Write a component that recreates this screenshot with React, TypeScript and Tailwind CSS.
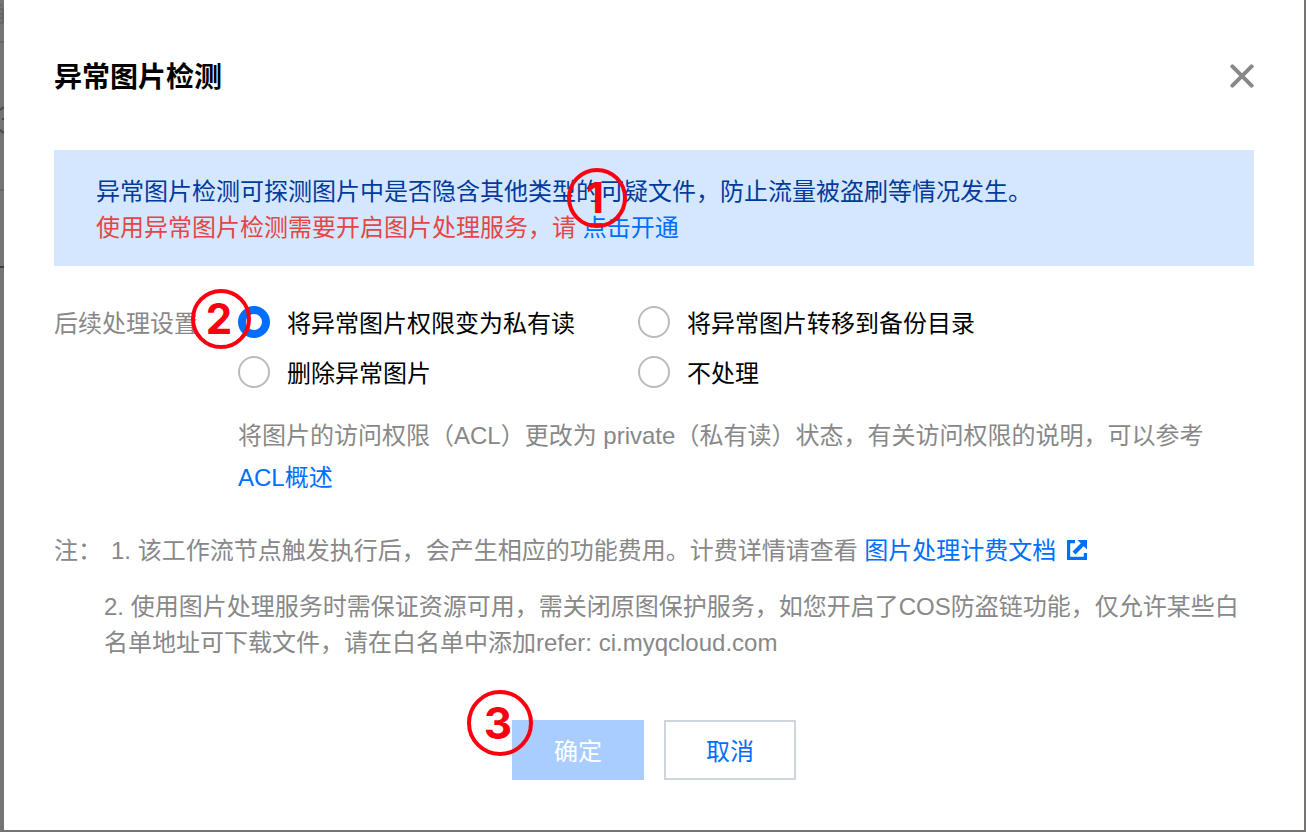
import React, { useState } from 'react';

interface Option { value: string; label: string; }

const OPTIONS: Option[] = [
  { value: 'private', label: '将异常图片权限变为私有读' },
  { value: 'backup', label: '将异常图片转移到备份目录' },
  { value: 'delete', label: '删除异常图片' },
  { value: 'none', label: '不处理' },
];

function StepMark({ n, className }: { n: number; className: string }) {
  return (
    <span className={`pointer-events-none absolute z-10 flex items-center justify-center rounded-full border-4 border-[#fc000f] pr-1 font-['Inter',sans-serif] font-bold leading-none text-[#fc000f] ${className}`}>
      {n}
    </span>
  );
}

function CloseIcon() {
  return (
    <svg width="24" height="24" viewBox="0 0 24 24" fill="none" stroke="#888" strokeWidth="4" strokeLinecap="round" aria-hidden="true">
      <path d="M2.4 2.4 21.6 21.6M21.6 2.4 2.4 21.6" />
    </svg>
  );
}

function ExternalIcon() {
  return (
    <svg width="20" height="20" viewBox="0 0 20 20" fill="none" stroke="#006eff" aria-hidden="true">
      <path d="M8 1.6H1.6V18.4H18.4V13" strokeWidth="3.2" />
      <path d="M7 13 17 3" strokeWidth="4" />
      <path d="M10.5 0H20V9.5Z" fill="#006eff" stroke="none" />
    </svg>
  );
}

// edge of the page that stays visible behind the dialog
function PageEdge() {
  return (
    <div aria-hidden="true" className="w-1 shrink-0 overflow-hidden">
      <svg width="4" height="280" viewBox="0 0 4 280" fill="none" stroke="#4a4948">
        <path d="M0 5h2M0 9h3V23H0M0 14h3M0 18h3" stroke="#5c5b5a" />
        <path d="M0 42h4M0 190h4" strokeWidth="2" stroke="#676665" />
        <path d="M4 107 0 110M2 119h2M0 130l4 3" strokeWidth="2" />
        <path d="M0 267h4" strokeWidth="2" stroke="#3e3d3c" />
      </svg>
    </div>
  );
}

export default function App() {
  const [action, setAction] = useState('private');

  return (
    <div className="flex min-h-screen bg-[#757473] pr-0.5 pb-0.5 font-['Liberation_Sans','Noto_Sans_CJK_SC',sans-serif] text-2xl leading-9 text-[#888]">
      <PageEdge />
      <div role="dialog" aria-labelledby="dialog-title" className="min-w-0 flex-1 bg-white px-[50px] pt-14 pb-[50px]">
        <header className="flex h-10 items-center justify-between">
          <h1 id="dialog-title" className="pt-1 text-[28px] font-bold text-black">异常图片检测</h1>
          <button type="button" aria-label="关闭"><CloseIcon /></button>
        </header>

        <div className="relative mt-[54px] bg-[#d5e7ff] px-[42px] pt-6 pb-5">
          <p className="text-[#003b9c]">异常图片检测可探测图片中是否隐含其他类型的可疑文件，防止流量被盗刷等情况发生。</p>
          <p className="text-[#e54545]">
            使用异常图片检测需要开启图片处理服务，请 <a href="#open" className="text-[#006eff]">点击开通</a>
          </p>
          <StepMark n={1} className="top-[18px] left-[513px] size-[60px] text-[42px]" />
        </div>

        <div role="radiogroup" aria-labelledby="action-label" className="relative mt-10 flex">
          <div id="action-label" className="w-46 shrink-0 pt-0.5 leading-8">后续处理设置</div>
          <div className="min-w-0 flex-1">
            <div className="grid grid-cols-[400px_1fr] gap-y-[18px]">
              {OPTIONS.map((o) => (
                <label key={o.value} className="flex h-8 items-center gap-[17px] text-black">
                  <input
                    type="radio"
                    name="action"
                    value={o.value}
                    checked={action === o.value}
                    onChange={() => setAction(o.value)}
                    className="size-8 shrink-0 appearance-none rounded-full border-2 border-[#bbb] bg-white checked:border-8 checked:border-[#006eff]"
                  />
                  <span className="pt-1">{o.label}</span>
                </label>
              ))}
            </div>
            <p className="mt-[27px] leading-[42px]">
              将图片的访问权限（ACL）更改为 private（私有读）状态，有关访问权限的说明，可以参考{' '}
              <a href="#acl" className="text-[#006eff]">ACL概述</a>
            </p>
          </div>
          <StepMark n={2} className="-top-[17px] left-[137px] size-[60px] text-[42px]" />
        </div>

        <div className="mt-[34px] space-y-5">
          <p className="flex items-center">
            <span className="w-[57px] shrink-0">注：</span>
            <span>
              1. 该工作流节点触发执行后，会产生相应的功能费用。计费详情请查看{' '}
              <a href="#billing" className="text-[#006eff]">
                图片处理计费文档 <span className="ml-1 inline-block align-[-1px]"><ExternalIcon /></span>
              </a>
            </span>
          </p>
          <p className="pl-[50px]">
            2. 使用图片处理服务时需保证资源可用，需关闭原图保护服务，如您开启了COS防盗链功能，仅允许某些白名单地址可下载文件，请在白名单中添加refer: ci.myqcloud.com
          </p>
        </div>

        <footer className="mt-[59px] flex justify-center gap-5">
          <div className="relative flex">
            <button type="button" disabled className="h-15 w-33 bg-[#aacdff] pt-1 text-white">确定</button>
            <StepMark n={3} className="-top-[30px] -left-[45px] size-[66px] text-[44px]" />
          </div>
          <button type="button" className="h-15 w-33 border-2 border-[#cfd5de] pt-1 text-[#006eff]">取消</button>
        </footer>
      </div>
    </div>
  );
}
